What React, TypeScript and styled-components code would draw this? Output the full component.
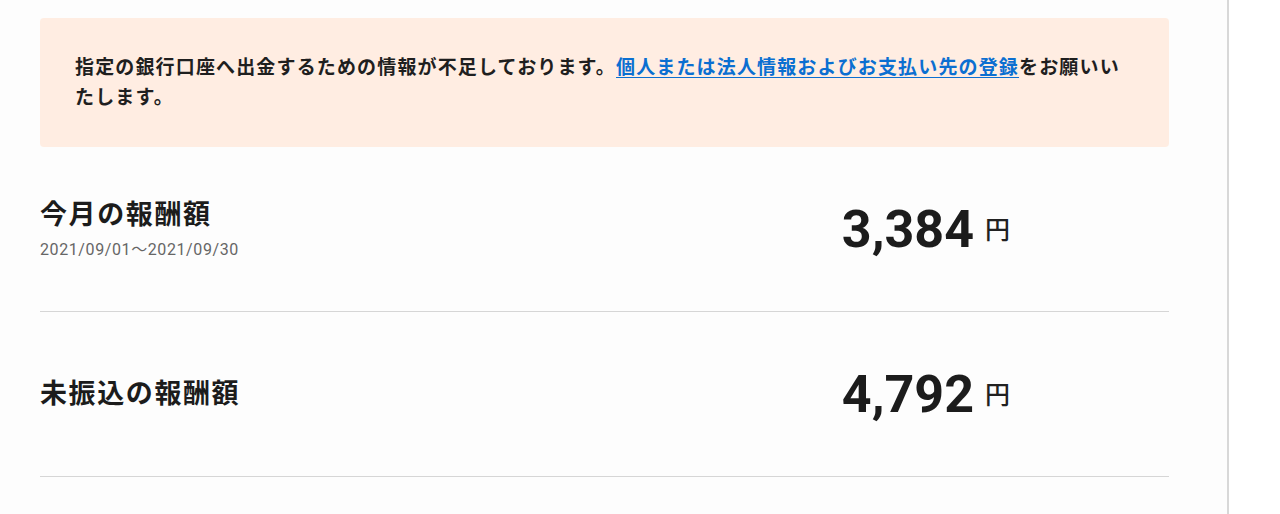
import styled, { createGlobalStyle } from "styled-components";

const GlobalStyle = createGlobalStyle`
  html, body {
    margin: 0;
    padding: 0;
    background: #ffffff;
  }
  body {
    font-family: Roboto, "Noto Sans CJK JP", sans-serif;
    color: #212121;
  }
`;

const Page = styled.div`
  display: flex;
  height: 514px;
  overflow: hidden;
`;

const Main = styled.main`
  width: 1229px;
  box-sizing: border-box;
  padding: 18px 58px 0 40px;
  background: #fdfdfd;
  border-right: 2px solid #d8d8d8;
`;

const Notice = styled.div`
  background: #ffede2;
  border-radius: 4px;
  padding: 35px 40px 34px 35px;
  font-size: 19px;
  line-height: 30px;
  font-weight: 700;
  letter-spacing: 1.15px;
  color: #1f1f1f;

  a {
    color: #0b6fd1;
    text-decoration: underline;
    text-underline-offset: 3px;
  }
`;

const Row = styled.section`
  display: grid;
  grid-template-columns: 1fr auto;
  align-items: center;
  height: 165px;
  box-sizing: border-box;
  padding-right: 159px;
  border-bottom: 1px solid #d6d6d6;
`;

const Label = styled.div`
  display: flex;
  flex-direction: column;
  gap: 4px;
`;

const Title = styled.h2`
  margin: 0;
  font-size: 27px;
  line-height: 34px;
  font-weight: 600;
  letter-spacing: 1.6px;
  color: #1c1c1c;
`;

const Period = styled.span`
  font-size: 16px;
  color: #666666;
  letter-spacing: 0.6px;
`;

const Amount = styled.div`
  display: flex;
  align-items: baseline;
  gap: 11px;
`;

const Figure = styled.span`
  font-family: Roboto, sans-serif;
  font-size: 52px;
  font-weight: 700;
  color: #1c1c1c;
`;

const Unit = styled.span`
  font-size: 25px;
  font-weight: 500;
  position: relative;
  top: -8px;
`;

interface RewardProps {
  title: string;
  period?: string;
  amount: string;
}

const RewardRow = ({ title, period, amount }: RewardProps) => (
  <Row>
    <Label>
      <Title>{title}</Title>
      {period && <Period>{period}</Period>}
    </Label>
    <Amount>
      <Figure>{amount}</Figure>
      <Unit>円</Unit>
    </Amount>
  </Row>
);

export default function App() {
  return (
    <Page>
      <GlobalStyle />
      <Main>
        <Notice>
          指定の銀行口座へ出金するための情報が不足しております。
          <a href="#">個人または法人情報およびお支払い先の登録</a>
          をお願いいたします。
        </Notice>
        <RewardRow
          title="今月の報酬額"
          period="2021/09/01～2021/09/30"
          amount="3,384"
        />
        <RewardRow title="未振込の報酬額" amount="4,792" />
      </Main>
    </Page>
  );
}
